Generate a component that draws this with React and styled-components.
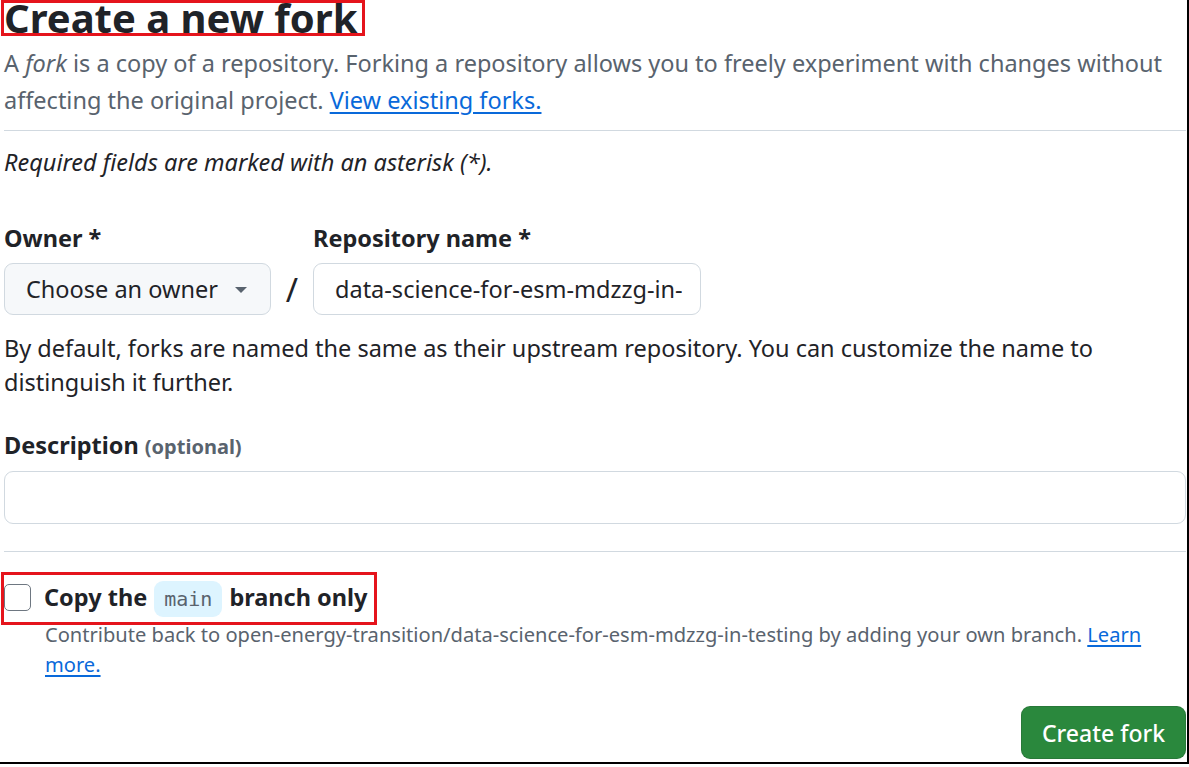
import React from "react";
import styled, { createGlobalStyle } from "styled-components";

const GlobalStyle = createGlobalStyle`
  html, body {
    margin: 0;
    padding: 0;
    background: #ffffff;
  }
  body {
    font-family: "Noto Sans", "Open Sans", sans-serif;
    color: #1f2328;
  }
`;

const Frame = styled.div`
  box-sizing: border-box;
  width: 1189px;
  height: 764px;
  padding: 0 1px 0 4px;
  border-right: 2px solid #000000;
  border-bottom: 2px solid #000000;
  overflow: hidden;
  display: flex;
  flex-direction: column;
`;

// red annotation frame drawn round a block
const Marked = styled.div`
  align-self: flex-start;
  border: 3px solid #e5141c;
  margin-left: -3px;
  margin-top: ${(p) => p.$top || 0}px;
  padding-right: ${(p) => p.$padRight || 0}px;
`;

const Heading = styled.h1`
  margin: 0;
  font-size: 40px;
  line-height: 30px;
  height: 30px;
  font-weight: 700;
  color: #1f2328;
  white-space: nowrap;
`;

const Lead = styled.p`
  margin: 9px 0 0;
  font-size: 23.5px;
  line-height: 37px;
  color: #59636e;
`;

const Link = styled.a`
  color: #0969da;
  text-decoration: underline;
  text-underline-offset: 3px;
`;

const Rule = styled.hr`
  margin: ${(p) => p.$top}px 0 0;
  border: 0;
  border-top: 1px solid #d1d9e0;
  height: 0;
`;

const Note = styled.p`
  margin: 14px 0 0;
  font-size: 23.5px;
  line-height: 34px;
  font-style: italic;
  color: #1f2328;
`;

const FieldRow = styled.div`
  display: flex;
  align-items: flex-end;
  margin-top: 42px;
`;

const Field = styled.div`
  display: flex;
  flex-direction: column;
  gap: 8px;
`;

const Label = styled.label`
  font-size: 23.5px;
  line-height: 34px;
  font-weight: 700;
  color: #1f2328;
`;

const Optional = styled.span`
  font-size: 20px;
  color: #59636e;
`;

const OwnerButton = styled.button`
  box-sizing: border-box;
  width: 267px;
  height: 52px;
  padding: 0 23px 0 21px;
  display: flex;
  align-items: center;
  justify-content: space-between;
  background: #f6f8fa;
  border: 1px solid #d1d9e0;
  border-radius: 9px;
  font-family: inherit;
  font-size: 23.5px;
  color: #1f2328;
`;

const Caret = styled.span`
  width: 0;
  height: 0;
  border-left: 6px solid transparent;
  border-right: 6px solid transparent;
  border-top: 6px solid #59636e;
  margin-top: 2px;
`;

const Slash = styled.span`
  width: 42px;
  height: 52px;
  display: flex;
  align-items: center;
  justify-content: center;
  font-size: 33px;
  color: #1f2328;
`;

const TextInput = styled.input`
  box-sizing: border-box;
  width: ${(p) => p.$width || "100%"};
  height: ${(p) => p.$height || 52}px;
  padding: 0 18px 0 21px;
  border: 1px solid #d1d9e0;
  border-radius: 9px;
  background: #ffffff;
  font-family: inherit;
  font-size: 23.5px;
  color: #1f2328;
  outline: none;
`;

const Hint = styled.p`
  margin: 16px 0 0;
  font-size: 23.5px;
  line-height: 34px;
  color: #1f2328;
`;

const DescField = styled(Field)`
  margin-top: 29px;
  gap: 7px;
`;

const CheckRow = styled.div`
  display: flex;
  align-items: center;
  gap: 13px;
  height: 47px;
`;

const Box = styled.span`
  box-sizing: border-box;
  width: 27px;
  height: 27px;
  margin-top: -2px;
  border: 1px solid #6e7781;
  border-radius: 5px;
  background: #ffffff;
`;

const CheckLabel = styled.span`
  display: flex;
  align-items: center;
  gap: 7px;
  font-size: 23.5px;
  font-weight: 700;
  color: #1f2328;
  margin-top: -4px;
`;

const Code = styled.code`
  display: inline-block;
  padding: 0 10px;
  height: 36px;
  line-height: 36px;
  margin-top: 5px;
  border-radius: 9px;
  background: #ddf4ff;
  font-family: "DejaVu Sans Mono", "Liberation Mono", monospace;
  font-size: 20px;
  font-weight: 400;
  color: #59636e;
`;

const Help = styled.p`
  margin: -5px 0 0 41px;
  font-size: 20.1px;
  line-height: 30px;
  color: #59636e;
`;

const Actions = styled.div`
  display: flex;
  justify-content: flex-end;
  margin-top: 26px;
`;

const PrimaryButton = styled.button`
  box-sizing: border-box;
  width: 165px;
  height: 53px;
  border: 1px solid rgba(31, 35, 40, 0.15);
  border-radius: 9px;
  background: #2a883d;
  color: #ffffff;
  font-family: inherit;
  font-size: 23px;
  font-weight: 500;
`;

export default function App() {
  return (
    <>
      <GlobalStyle />
      <Frame>
        <Marked $padRight={5}>
          <Heading>Create a new fork</Heading>
        </Marked>
        <Lead>
          A <em>fork</em> is a copy of a repository. Forking a repository allows
          you to freely experiment with changes without affecting the original
          project. <Link href="#">View existing forks.</Link>
        </Lead>
        <Rule $top={11} />
        <Note>Required fields are marked with an asterisk (*).</Note>

        <FieldRow>
          <Field>
            <Label>Owner *</Label>
            <OwnerButton type="button">
              Choose an owner
              <Caret />
            </OwnerButton>
          </Field>
          <Slash>/</Slash>
          <Field>
            <Label>Repository name *</Label>
            <TextInput
              $width="388px"
              readOnly
              value="data-science-for-esm-mdzzg-in-"
            />
          </Field>
        </FieldRow>
        <Hint>
          By default, forks are named the same as their upstream repository. You
          can customize the name to distinguish it further.
        </Hint>

        <DescField>
          <Label>
            Description <Optional>(optional)</Optional>
          </Label>
          <TextInput $height={53} />
        </DescField>

        <Rule $top={27} />

        <Marked $padRight={6} $top={20}>
          <CheckRow>
            <Box />
            <CheckLabel>
              Copy the <Code>main</Code> branch only
            </CheckLabel>
          </CheckRow>
        </Marked>
        <Help>
          Contribute back to open-energy-transition/data-science-for-esm-mdzzg-in-testing
          by adding your own branch. <Link href="#">Learn more.</Link>
        </Help>

        <Actions>
          <PrimaryButton type="button">Create fork</PrimaryButton>
        </Actions>
      </Frame>
    </>
  );
}
